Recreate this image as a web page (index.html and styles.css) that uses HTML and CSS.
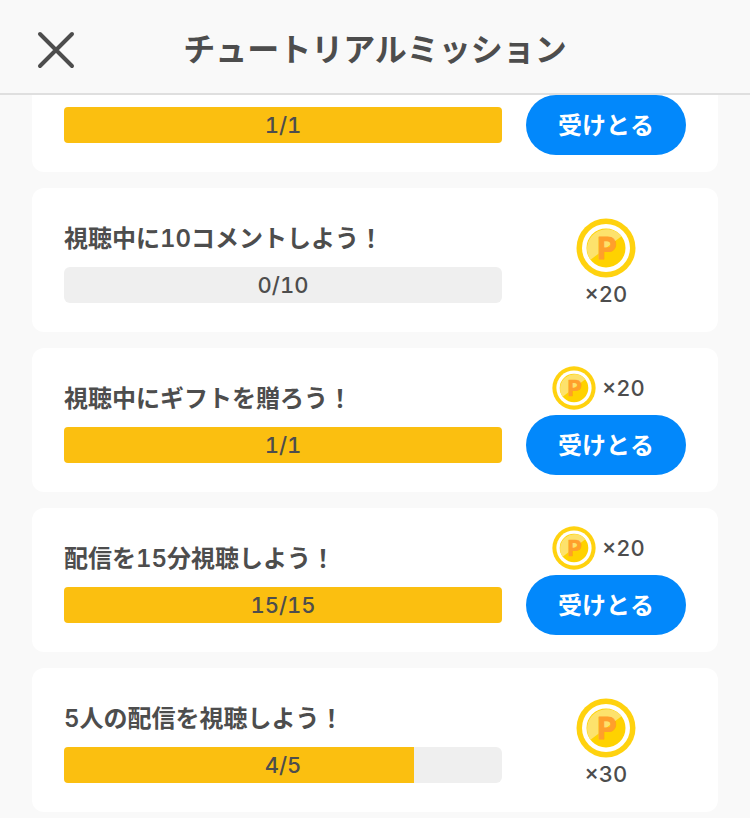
FILE: index.html
```html
<!DOCTYPE html>
<html lang="ja">
<head>
    <meta charset="UTF-8">
    <meta name="viewport" content="width=device-width, initial-scale=1.0">
    <title>チュートリアルミッション</title>
    <link rel="stylesheet" href="styles.css">
</head>
<body>
    <svg width="0" height="0" class="defs" aria-hidden="true">
        <symbol id="coin" viewBox="0 0 60 60">
            <circle cx="30" cy="30" r="29.5" fill="#ffd20f"/>
            <circle cx="30" cy="30" r="24" fill="#fff"/>
            <circle cx="30" cy="30" r="19.5" fill="#ffd200"/>
            <path d="M14.5 41.8 A19.5 19.5 0 0 1 45.5 18.2 Z" fill="#fde26c"/>
        </symbol>
    </svg>

    <header class="header">
        <button class="close" type="button" aria-label="閉じる">
            <svg width="40" height="40" viewBox="0 0 40 40"><path d="M4 4 L36 36 M36 4 L4 36" stroke="#4d4d4d" stroke-width="4" stroke-linecap="round"/></svg>
        </button>
        <h1>チュートリアルミッション</h1>
    </header>

    <main class="missions">
        <section class="card card-cut">
            <div class="mission">
                <div class="bar"><div class="fill full" style="width: 100%"></div><span>1/1</span></div>
            </div>
            <div class="claim">
                <button class="receive" type="button">受けとる</button>
            </div>
        </section>

        <section class="card">
            <div class="mission">
                <h2>視聴中に10コメントしよう！</h2>
                <div class="bar"><span>0/10</span></div>
            </div>
            <div class="reward">
                <svg class="coin" viewBox="0 0 60 60"><use href="#coin"/><text x="31" y="41">P</text></svg>
                <span>×20</span>
            </div>
        </section>

        <section class="card">
            <div class="mission">
                <h2>視聴中にギフトを贈ろう！</h2>
                <div class="bar"><div class="fill full" style="width: 100%"></div><span>1/1</span></div>
            </div>
            <div class="claim">
                <div class="amount">
                    <svg class="coin coin-small" viewBox="0 0 60 60"><use href="#coin"/><text x="31" y="41">P</text></svg>
                    <span>×20</span>
                </div>
                <button class="receive" type="button">受けとる</button>
            </div>
        </section>

        <section class="card">
            <div class="mission">
                <h2>配信を15分視聴しよう！</h2>
                <div class="bar"><div class="fill full" style="width: 100%"></div><span>15/15</span></div>
            </div>
            <div class="claim">
                <div class="amount">
                    <svg class="coin coin-small" viewBox="0 0 60 60"><use href="#coin"/><text x="31" y="41">P</text></svg>
                    <span>×20</span>
                </div>
                <button class="receive" type="button">受けとる</button>
            </div>
        </section>

        <section class="card">
            <div class="mission">
                <h2>5人の配信を視聴しよう！</h2>
                <div class="bar"><div class="fill" style="width: 80%"></div><span>4/5</span></div>
            </div>
            <div class="reward">
                <svg class="coin" viewBox="0 0 60 60"><use href="#coin"/><text x="31" y="41">P</text></svg>
                <span>×30</span>
            </div>
        </section>
    </main>
</body>
</html>
```
FILE: styles.css
```css
* { box-sizing: border-box; }
body { margin: 0; background-color: #f9f9f9; color: #4d4d4d; font-family: Inter, "Noto Sans CJK JP", sans-serif; font-size: 22px; font-weight: 500; font-variant-numeric: tabular-nums; }
button { border: 0; padding: 0; font: inherit; cursor: pointer; }
h1, h2 { margin: 0; }
.defs { position: absolute; }

.header { display: grid; grid-template-columns: 40px 1fr 40px; align-items: center; padding: 6px 36px 0; height: 95px; border-bottom: 2px solid #dfdfdf; background-color: #f9f9f9; }
.header h1 { font-size: 32px; line-height: 48px; font-weight: 700; text-align: center; }
.close { height: 40px; background: none; }
.close svg { display: block; }

.missions { display: flex; flex-direction: column; gap: 16px; padding: 0 32px 6px; }
.card { display: flex; align-items: flex-end; gap: 24px; min-height: 144px; padding: 18px 32px 17px; border-radius: 12px; background-color: #fff; }
.card-cut { min-height: 0; padding-top: 0; border-radius: 0 0 12px 12px; }

.mission { flex: 1; padding-bottom: 12px; }
.mission h2 { margin-bottom: 10px; font-size: 24px; line-height: 36px; font-weight: 600; }
.bar { display: grid; height: 36px; border-radius: 6px; background-color: #efefef; }
.bar > * { grid-area: 1 / 1; }
.bar span { line-height: 36px; text-align: center; }
.fill { border-radius: 4px 0 0 4px; background-color: #fbbf10; }
.fill.full { border-radius: 4px; }

.claim, .reward { width: 160px; }
.reward { display: flex; flex-direction: column; align-items: center; gap: 1px; padding-bottom: 6px; line-height: 30px; }
.coin { width: 60px; height: 60px; }
.coin text { font-size: 30px; font-weight: 700; text-anchor: middle; fill: #ff9f2c; stroke: #ff9f2c; stroke-width: 1; stroke-linejoin: round; }
.amount { display: flex; align-items: center; gap: 6px; margin-bottom: 5px; padding-left: 26px; }
.coin-small { width: 44px; height: 44px; }
.receive { display: block; width: 100%; height: 60px; padding-bottom: 4px; border-radius: 30px; background-color: #0288fb; color: #fff; font-size: 24px; font-weight: 600; }
```
